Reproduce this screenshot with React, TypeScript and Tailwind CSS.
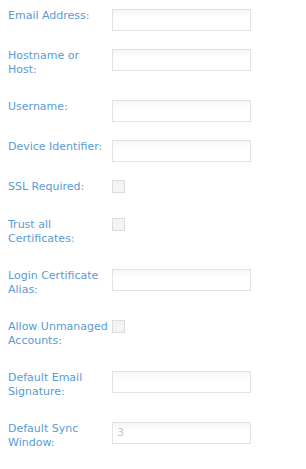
const FIELDS: { label: string; type: 'text' | 'check'; value?: string }[] = [
  { label: 'Email Address:', type: 'text' },
  { label: 'Hostname or Host:', type: 'text' },
  { label: 'Username:', type: 'text' },
  { label: 'Device Identifier:', type: 'text' },
  { label: 'SSL Required:', type: 'check' },
  { label: 'Trust all Certificates:', type: 'check' },
  { label: 'Login Certificate Alias:', type: 'text' },
  { label: 'Allow Unmanaged Accounts:', type: 'check' },
  { label: 'Default Email Signature:', type: 'text' },
  { label: 'Default Sync Window:', type: 'text', value: '3' },
];

export default function App() {
  return (
    <div className="w-[306px] h-[469px] bg-white px-2 pt-2 overflow-hidden font-['Verdana','DejaVu_Sans',sans-serif] text-[11px] leading-[14px]">
      {FIELDS.map(f => (
        <div key={f.label} className="flex items-start">
          <div className="w-[104px] shrink-0 pt-px pb-[22px] pr-1 text-[#5a9bd5]">{f.label}</div>
          {f.type === 'text' ? (
            <div className="pt-px pb-[17px]">
              <div className="w-[139px] h-[22px] border border-[#e1e1e8] bg-gradient-to-b from-[#f6f6f8] to-white to-[40%] px-1 leading-[20px] text-[#c9c9c9]">
                {f.value}
              </div>
            </div>
          ) : (
            <div className="pt-px pb-[24px]">
              <div className="w-[13px] h-[13px] border border-[#dcdcdc] bg-[#f4f4f4]" />
            </div>
          )}
        </div>
      ))}
    </div>
  );
}
